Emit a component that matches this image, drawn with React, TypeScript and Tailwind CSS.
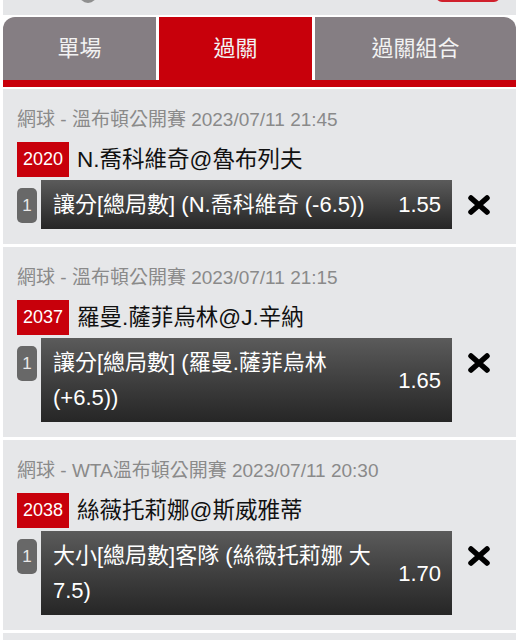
import React from 'react';

const FONT = { fontFamily: '"Liberation Sans", "Noto Sans CJK TC", sans-serif' };

const bets = [
  {
    league: '網球 - 溫布頓公開賽 2023/07/11 21:45',
    code: '2020',
    match: 'N.喬科維奇@魯布列夫',
    pick: '讓分[總局數] (N.喬科維奇 (-6.5))',
    odds: '1.55',
  },
  {
    league: '網球 - 溫布頓公開賽 2023/07/11 21:15',
    code: '2037',
    match: '羅曼.薩菲烏林@J.辛納',
    pick: '讓分[總局數] (羅曼.薩菲烏林 (+6.5))',
    odds: '1.65',
  },
  {
    league: '網球 - WTA溫布頓公開賽 2023/07/11 20:30',
    code: '2038',
    match: '絲薇托莉娜@斯威雅蒂',
    pick: '大小[總局數]客隊 (絲薇托莉娜 大 7.5)',
    odds: '1.70',
  },
];

function CloseIcon() {
  return (
    <svg width="24" height="20" viewBox="0 0 24 20">
      <path d="M4 3 L20 17 M20 3 L4 17" stroke="#000" strokeWidth="5.5" strokeLinecap="round" />
    </svg>
  );
}

function BetCard({ bet }: { bet: (typeof bets)[number] }) {
  return (
    <div className="bg-[#e6e7e9] pl-[14px] pt-[18px] pb-[15px]">
      <div className="text-[19px] leading-[26px] text-[#8a8a8a] whitespace-nowrap">{bet.league}</div>

      <div className="mt-[9px] flex items-center gap-[8px]">
        <span className="h-[35px] px-[6px] flex items-center bg-[#c8000b] text-white text-[18px]">
          {bet.code}
        </span>
        <span className="text-[22.5px] text-[#111]">{bet.match}</span>
      </div>

      <div className="mt-[3px] flex items-start">
        <div className="mt-[8px] w-[20px] h-[35px] rounded-[5px] bg-[#686868] text-[#e8e8e8] text-[17px] flex items-center justify-center">
          1
        </div>
        <div className="ml-[4px] w-[411px] flex items-center gap-[12px] pl-[12px] pr-[11px] py-[7px] bg-gradient-to-b from-[#5b5b5b] to-[#262626] text-white">
          <div className="flex-1 text-[22px] leading-[35px]">{bet.pick}</div>
          <div className="shrink-0 text-[22px] leading-[35px]">{bet.odds}</div>
        </div>
        <div className="ml-[15px] mt-[15px] flex items-center">
          <CloseIcon />
        </div>
      </div>
    </div>
  );
}

export default function App() {
  return (
    <div className="min-h-screen bg-white" style={FONT}>
      <div className="ml-[3px] w-[513px] flex flex-col">
        {/* top bar, mostly scrolled away */}
        <div className="h-[15px] bg-[#e5e6e8] flex items-start justify-between overflow-hidden">
          <div className="ml-[76px] -mt-[17px] w-[18px] h-[20px] rounded-full bg-[#8f8f8f]"></div>
          <div className="mr-[16px] -mt-[30px] w-[64px] h-[32px] rounded-[6px] border-2 border-[#d0202c] bg-white"></div>
        </div>

        {/* tabs */}
        <div className="mt-[2px] flex gap-[3px] h-[63px] text-[22px] text-[#f2f2f2]">
          <div className="w-[153px] rounded-tl-[12px] bg-[#857e83] flex items-center justify-center">單場</div>
          <div className="w-[153px] bg-[#c8000b] flex items-center justify-center">過關</div>
          <div className="flex-1 rounded-tr-[12px] bg-[#857e83] flex items-center justify-center">過關組合</div>
        </div>
        <div className="h-[7px] bg-[#c8000b]"></div>

        {/* bet slip */}
        <div className="mt-[2px] flex flex-col gap-[3px]">
          {bets.map((bet) => (
            <BetCard key={bet.code} bet={bet} />
          ))}
          <div className="h-[40px] bg-[#e6e7e9]"></div>
        </div>
      </div>
    </div>
  );
}
